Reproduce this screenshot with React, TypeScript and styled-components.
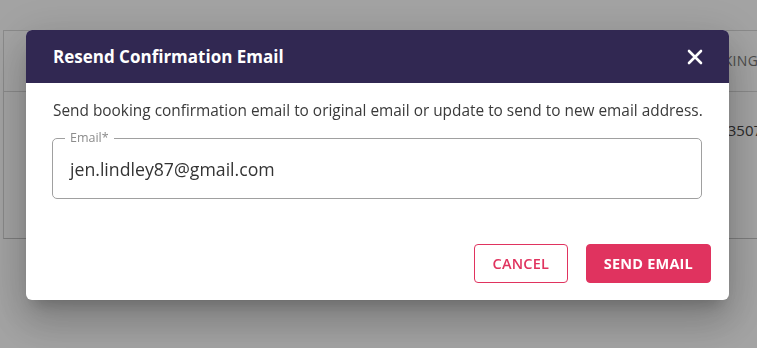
import React from "react";
import styled, { createGlobalStyle } from "styled-components";

const GlobalStyle = createGlobalStyle`
  html, body {
    margin: 0;
    padding: 0;
    background: #ffffff;
    font-family: "Open Sans", "Noto Sans", sans-serif;
  }
  * {
    box-sizing: border-box;
  }
`;

const Page = styled.div`
  width: 757px;
  height: 348px;
  padding: 30px 0 0 3px;
  overflow: hidden;
`;

const Card = styled.div`
  width: 900px;
  height: 209px;
  border-left: 1px solid #d8d8d8;
  border-top: 1px solid #d8d8d8;
  border-bottom: 1px solid #c4c4c4;
  display: flex;
  flex-direction: column;
`;

const Row = styled.div<{ $head?: boolean }>`
  display: grid;
  grid-template-columns: 688px 1fr;
  height: ${(p) => (p.$head ? "61px" : "auto")};
  align-items: ${(p) => (p.$head ? "center" : "start")};
  padding: ${(p) => (p.$head ? "0 0 1px 0" : "28px 0 0 10px")};
  border-bottom: ${(p) => (p.$head ? "1px solid #d8d8d8" : "none")};
  font-size: ${(p) => (p.$head ? "14px" : "15px")};
  color: ${(p) => (p.$head ? "#777" : "#444")};
  letter-spacing: ${(p) => (p.$head ? "0.3px" : "0")};
`;

const Overlay = styled.div`
  position: fixed;
  inset: 0;
  background: rgba(0, 0, 0, 0.36);
  display: flex;
  align-items: flex-start;
  justify-content: flex-start;
  padding: 30px 0 0 26px;
`;

const Dialog = styled.div`
  width: 703px;
  height: 270px;
  background: #fff;
  border-radius: 6px;
  overflow: hidden;
  display: flex;
  flex-direction: column;
  box-shadow: 0 11px 15px -7px rgba(0, 0, 0, 0.2),
    0 24px 38px 3px rgba(0, 0, 0, 0.14), 0 9px 46px 8px rgba(0, 0, 0, 0.12);
`;

const Header = styled.div`
  height: 53px;
  background: #312852;
  display: flex;
  align-items: center;
  justify-content: space-between;
  padding: 0 26px 0 27px;
`;

const Title = styled.h2`
  margin: 0;
  font-size: 17px;
  font-weight: 700;
  color: #ffffff;
`;

const CloseButton = styled.button`
  border: none;
  background: none;
  padding: 0;
  width: 16px;
  height: 16px;
  display: flex;
  align-items: center;
  justify-content: center;
  cursor: pointer;
`;

const Body = styled.div`
  flex: 1;
  display: flex;
  flex-direction: column;
  padding: 18px 18px 17px 26px;
`;

const Intro = styled.p`
  margin: 0 0 17px 1px;
  font-size: 15.4px;
  line-height: 20px;
  color: #3a3a3a;
`;

const Field = styled.div`
  position: relative;
  margin-right: 9px;
  height: 61px;
  border: 1px solid #a0a0a0;
  border-radius: 5px;
  padding: 0 17px;
  display: flex;
  align-items: center;
`;

const Label = styled.span`
  position: absolute;
  left: 12px;
  top: -8px;
  padding: 0 5px;
  background: #fff;
  font-size: 12.5px;
  line-height: 14px;
  color: #8c8c8c;
`;

const Value = styled.div`
  font-size: 17.7px;
  color: #333;
  margin-top: 1px;
`;

const Actions = styled.div`
  margin-top: auto;
  display: flex;
  justify-content: flex-end;
  gap: 18px;
`;

const Button = styled.button<{ $primary?: boolean }>`
  height: 39px;
  padding: 0 17px;
  min-width: 94px;
  border-radius: 4px;
  border: 1px solid #e0335f;
  background: ${(p) => (p.$primary ? "#e0335f" : "#ffffff")};
  color: ${(p) => (p.$primary ? "#ffffff" : "#e0335f")};
  font-family: "Open Sans", "Noto Sans", sans-serif;
  font-size: 14.5px;
  font-weight: ${(p) => (p.$primary ? 700 : 600)};
  letter-spacing: 0.2px;
  cursor: pointer;
`;

export default function App() {
  return (
    <>
      <GlobalStyle />
      <Page>
        <Card>
          <Row $head>
            <span />
            <span>BOOKING ID</span>
          </Row>
          <Row>
            <span />
            <span>2023507</span>
          </Row>
        </Card>
      </Page>
      <Overlay>
        <Dialog>
          <Header>
            <Title>Resend Confirmation Email</Title>
            <CloseButton aria-label="Close">
              <svg width="16" height="16" viewBox="0 0 16 16">
                <path
                  d="M2 2 L14 14 M14 2 L2 14"
                  stroke="#fff"
                  strokeWidth="2.6"
                  strokeLinecap="round"
                />
              </svg>
            </CloseButton>
          </Header>
          <Body>
            <Intro>
              Send booking confirmation email to original email or update to
              send to new email address.
            </Intro>
            <Field>
              <Label>Email*</Label>
              <Value>jen.lindley87@gmail.com</Value>
            </Field>
            <Actions>
              <Button>CANCEL</Button>
              <Button $primary>SEND EMAIL</Button>
            </Actions>
          </Body>
        </Dialog>
      </Overlay>
    </>
  );
}
